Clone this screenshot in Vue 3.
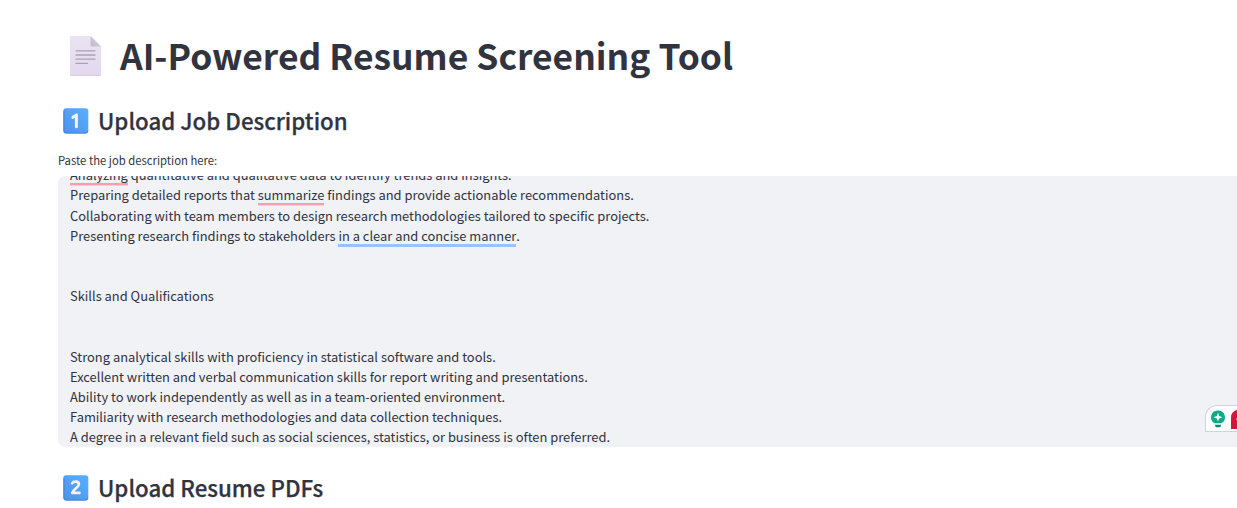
<script setup>
const lines = [
  [{ t: 'Analyzing', m: 'spell first' }, { t: ' quantitative and qualitative data to identify trends and insights.' }],
  [{ t: 'Preparing detailed reports that ' }, { t: 'summarize', m: 'spell' }, { t: ' findings and provide actionable recommendations.' }],
  [{ t: 'Collaborating with team members to design research methodologies tailored to specific projects.' }],
  [{ t: 'Presenting research findings to stakeholders ' }, { t: 'in a clear and concise manner', m: 'style' }, { t: '.' }],
  [],
  [],
  [{ t: 'Skills and Qualifications' }],
  [],
  [],
  [{ t: 'Strong analytical skills with proficiency in statistical software and tools.' }],
  [{ t: 'Excellent written and verbal communication skills for report writing and presentations.' }],
  [{ t: 'Ability to work independently as well as in a team-oriented environment.' }],
  [{ t: 'Familiarity with research methodologies and data collection techniques.' }],
  [{ t: 'A degree in a relevant field such as social sciences, statistics, or business is often preferred.' }],
]
</script>

<template>
  <main class="page">
    <h1 class="title">
      <svg class="doc" width="32" height="40" viewBox="0 0 32 40">
        <defs>
          <linearGradient id="paper" x1="0" y1="0" x2="0" y2="1">
            <stop offset="0" stop-color="#ebe4f3" /><stop offset="1" stop-color="#e3d8ee" />
          </linearGradient>
          <linearGradient id="fold" x1="0" y1="1" x2="1" y2="0">
            <stop offset="0" stop-color="#c3bac9" /><stop offset="1" stop-color="#d9d3de" />
          </linearGradient>
        </defs>
        <path d="M1 0H21L31 10.500V39Q31 40 30 40H1Q0 40 0 39V1Q0 0 1 0Z" fill="url(#paper)" />
        <path d="M20.500 0L31 10.500H22Q20.500 10.500 20.500 9Z" fill="url(#fold)" />
        <path d="M6 14.800H25M6 19H25M6 23.200H25M6 27.400H17.500" stroke="#aaa1b0" stroke-width="1.300" stroke-linecap="round" />
        <path d="M0.500 39.400H30.500" stroke="#d8cae2" stroke-width="1" />
      </svg>
      <span>AI-Powered Resume Screening Tool</span>
    </h1>
    <h2 class="heading">
      <svg class="key" width="26" height="26" viewBox="0 0 26 26">
        <defs>
          <linearGradient id="blue" x1="1" y1="0" x2="0" y2="1">
            <stop offset="0" stop-color="#59b0ff" /><stop offset="1" stop-color="#4c91ec" />
          </linearGradient>
        </defs>
        <rect x="0.300" y="0.300" width="25" height="25.200" rx="2.800" fill="url(#blue)" />
        <path d="M1 3V22.500Q1 25 3.500 25H22.500Q24.700 25 24.700 22.500" fill="none" stroke="#4384dc" stroke-width="1" />
        <path d="M9.900 9.300L13.400 6.900V18.700" fill="none" stroke="#f6f0ff" stroke-width="3" stroke-linecap="round" stroke-linejoin="round" />
      </svg>
      <span>Upload Job Description</span>
    </h2>
    <label class="label">Paste the job description here:</label>
    <section class="field">
      <div class="text">
        <p v-for="(line, i) in lines" :key="i" class="line"><span v-for="(part, j) in line" :key="j" :class="part.m">{{ part.t }}</span></p>
      </div>
      <div class="assist">
        <svg width="31" height="25" viewBox="0 0 31 25">
          <path d="M12 4.500A6.800 6.800 0 0 1 15.500 17.200H8.500A6.800 6.800 0 0 1 12 4.500Z" fill="#0daa86" />
          <path d="M8.800 18.800H15.200L14.200 21.200H9.800Z" fill="#07886f" />
          <path d="M12 6.800L13.200 10L16.400 11.200L13.200 12.400L12 15.600L10.800 12.400L7.600 11.200L10.800 10Z" fill="#fff" />
          <path d="M31 4Q25 5.500 25 11.500V23H31Z" fill="#d4143a" />
          <circle cx="31" cy="13.300" r="1" fill="#f08a9d" />
        </svg>
      </div>
    </section>
    <h2 class="heading second">
      <svg class="key" width="26" height="26" viewBox="0 0 26 26">
        <rect x="0.300" y="0.300" width="25" height="25.200" rx="2.800" fill="url(#blue)" />
        <path d="M1 3V22.500Q1 25 3.500 25H22.500Q24.700 25 24.700 22.500" fill="none" stroke="#4384dc" stroke-width="1" />
        <path d="M9.200 8.300C10.200 6.100 15.900 5.800 15.900 9.300C15.900 12.300 10.500 14 9.200 17.900H16.500" fill="none" stroke="#f6f0ff" stroke-width="2.600" stroke-linecap="round" stroke-linejoin="round" />
      </svg>
      <span>Upload Resume PDFs</span>
    </h2>
  </main>
</template>

<style scoped>
.page {
  box-sizing: border-box;
  height: 508px;
  padding: 31px 0 0 58px;
  overflow: hidden;
  background: #fff;
  color: #31333f;
  font-family: "Noto Sans CJK SC", "Noto Sans", sans-serif;
}
.title, .heading { display: flex; align-items: center; margin: 0; }
.title { height: 48px; font-size: 35.4px; font-weight: 700; line-height: 48px; }
.doc { margin: 1px 18px 0 12px; }
.heading { height: 30px; margin-top: 26px; font-size: 22.3px; font-weight: 500; line-height: 30px; -webkit-text-stroke: 0.25px #31333f; }
.key { margin: 2px 9px 0 5px; -webkit-text-stroke: 0; }
.label { display: block; height: 20px; margin-top: 15px; font-size: 11.3px; line-height: 20px; }
.field { position: relative; height: 271px; margin-top: 6px; background: #f0f2f6; border-radius: 7px 0 0 7px; overflow: hidden; }
.text { margin: -10.72px 0 0 12px; font-size: 12.9px; white-space: pre; }
.line { height: 20.16px; margin: 0; line-height: 20.16px; }
.spell, .style { display: inline-block; height: 18px; }
.spell { border-bottom: 2px solid #ff9caf; box-shadow: 0 1px #fbcdd8; }
.style { border-bottom: 3px solid #9dc1ff; }
.assist { position: absolute; right: 0; top: 229px; box-sizing: border-box; width: 32px; height: 27px; border: 1px solid #cfd1df; border-right: 0; border-radius: 12px 0 0 0; background: #fff; }
.assist svg { display: block; }
.second { margin-top: 25px; }
</style>
